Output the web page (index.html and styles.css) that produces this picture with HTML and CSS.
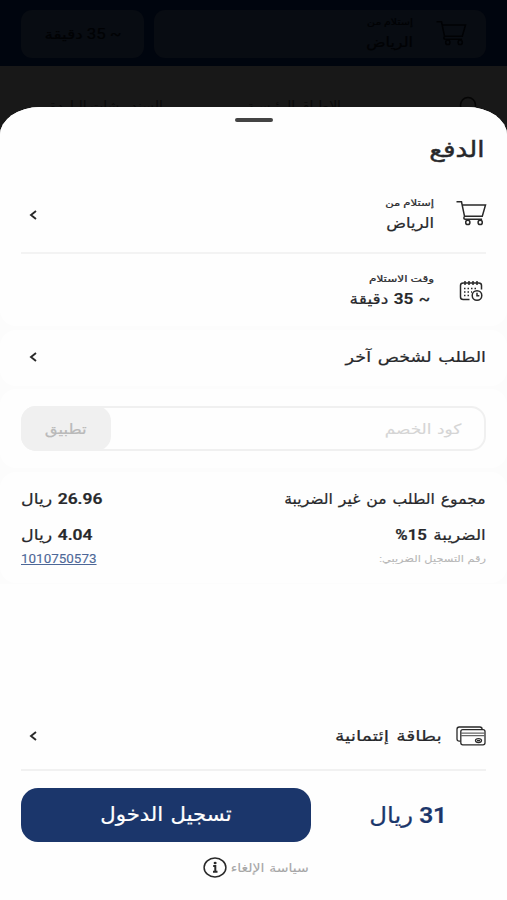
FILE: index.html
```html
<!DOCTYPE html>
<html lang="ar" dir="rtl">
<head>
<meta charset="utf-8">
<title>الدفع</title>
<link rel="stylesheet" href="styles.css">
</head>
<body>
<svg width="0" height="0" class="defs">
  <symbol id="cart" viewBox="0 0 32 26">
    <path d="M1.500 1.800h5l3.200 15.400M7.400 5h23.100l-3.200 11.200H9.600M9.700 16.800c-1.200.3-1.200 2.400.4 2.400h17"/>
    <circle cx="12.800" cy="22.400" r="2.100"/><circle cx="25.200" cy="22.400" r="2.100"/>
  </symbol>
  <symbol id="chevron" viewBox="0 0 8 10"><path d="M7 1L2 5l5 4"/></symbol>
</svg>
<header class="topbar">
  <div class="pill place">
    <svg class="cart dim"><use href="#cart"/></svg>
    <div><div class="t d-small">إستلام من</div><div class="t d-main">الرياض</div></div>
  </div>
  <div class="pill time"><span class="t d-time">~ 35 دقيقة</span></div>
</header>
<nav class="tabs">
  <svg class="search" viewBox="0 0 20 20"><circle cx="9" cy="9" r="7.500"/></svg>
  <span class="tab-a">الاطباق الرئيسية</span><span class="tab-b">السندويشات الباردة</span>
</nav>
<main class="sheet">
  <section class="card first">
    <div class="handle"></div>
    <h1><span class="t title">الدفع</span></h1>
    <div class="row pickup">
      <svg class="cart"><use href="#cart"/></svg>
      <div class="stack"><div class="t small s1">إستلام من</div><div class="t mid m1">الرياض</div></div>
      <svg class="chev"><use href="#chevron"/></svg>
    </div>
    <div class="row when">
      <svg class="cal" viewBox="0 0 24 22">
        <path d="M10.500 19.400H4.200c-1.800 0-2.700-.9-2.700-2.500V5.500c0-1.600.9-2.500 2.700-2.500h15.600c1.800 0 2.700.9 2.700 2.500v4M6 1v4M10 1v4M14 1v4M18 1v4"/>
        <path class="dots" d="M5 8.500h14M5 12h8M5 15.500h6"/>
        <circle cx="18" cy="15.500" r="4.800"/><path d="M18 12.800v2.900h2.300"/>
      </svg>
      <div class="stack"><div class="t small s2">وقت الاستلام</div><div class="t mid m2">~ <b>35</b> دقيقة</div></div>
    </div>
  </section>
  <section class="card other">
    <span class="t mid m3">الطلب لشخص آخر</span>
    <svg class="chev"><use href="#chevron"/></svg>
  </section>
  <section class="card coupon">
    <div class="field"><span class="t hint">كود الخصم</span><span class="apply"><span class="t apply-t">تطبيق</span></span></div>
  </section>
  <section class="card totals">
    <div class="line l1"><span class="t mid m4">مجموع الطلب من غير الضريبة</span><span class="t mid left v1"><b>26.96</b> ريال</span></div>
    <div class="line l2"><span class="t mid m5">الضريبة <b>15%</b></span><span class="t mid left v2"><b>4.04</b> ريال</span></div>
    <div class="line l3"><span class="t note">رقم التسجيل الضريبي:</span><a class="t left reg">1010750573</a></div>
  </section>
  <section class="method">
    <svg class="cards" viewBox="0 0 30 20">
      <path d="M4.500 15.200H3.300C1.800 15.200 1 14.400 1 13V3.200C1 1.800 1.800 1 3.300 1h20.500c1.500 0 2.300.8 2.300 2.200"/>
      <rect x="4.800" y="3.600" width="24.200" height="15.200" rx="2"/>
      <path class="stripe" d="M4.800 7.200h24.200M4.800 9.600h24.200"/>
      <ellipse cx="22.500" cy="14.600" rx="3" ry="1.900"/><path d="M21 14.600h3"/>
    </svg>
    <span class="t mid m6">بطاقة إئتمانية</span>
    <svg class="chev"><use href="#chevron"/></svg>
  </section>
  <footer>
    <div class="actions">
      <div class="price"><span class="t price-t"><b>31</b> ريال</span></div>
      <button><span class="t btn-t">تسجيل الدخول</span></button>
    </div>
    <div class="policy"><span class="t policy-t">سياسة الإلغاء</span>
      <svg class="info" viewBox="0 0 24 21"><ellipse cx="12" cy="10.500" rx="10.900" ry="9.400"/><path class="stem" d="M10.200 9h2.100v5.800M10 14.800h4.500"/><ellipse class="dot" cx="12.100" cy="6" rx="1.500" ry="1.200"/></svg>
    </div>
  </footer>
</main>
</body>
</html>
```
FILE: styles.css
```css
* { box-sizing: border-box; }
body { margin: 0; height: 900px; overflow: hidden; background: #181818; color: #27282b; font-family: Roboto, "DejaVu Sans", sans-serif; }
.defs { position: absolute; }
svg { display: block; fill: none; stroke: #292929; stroke-width: 1.5; flex: none; }
b { font-weight: 600; }
.t { display: inline-block; white-space: nowrap; transform-origin: right center; -webkit-text-stroke: .22px currentColor; }
.stack .t, .place .t { display: block; }
.t.left { transform-origin: left center; }

.topbar { height: 66px; background: #00050e; display: flex; gap: 10px; padding: 10px 21px 8px; }
.pill { background: #080c12; border-radius: 11px; display: flex; align-items: center; color: #010204; }
.place { flex: 1; padding: 0 19px 2px; gap: 22px; }
.time { width: 123px; justify-content: center; }
.d-small { font-size: 9px; line-height: 18px; transform: scaleX(1.22); }
.d-main { font-size: 14px; line-height: 22px; transform: scaleX(1.14); }
.t.d-time { font-size: 14px; transform-origin: center; transform: scaleX(1.2); }
.cart { width: 32px; height: 26px; }
.dim { stroke: #010204; }
.tabs { height: 41px; padding: 30px 28px 0; display: flex; overflow: hidden; color: #0a0a0a; font-size: 14px; line-height: 20px; white-space: nowrap; }
.search { width: 20px; height: 20px; stroke: #050505; }
.tab-a { margin-right: 118px; }
.tab-b { margin-right: 84px; }

.sheet { height: 793px; background: linear-gradient(#fcfcfc 0 477px, #fefefe 477px); border-radius: 40px 40px 0 0 / 28px 28px 0 0; overflow: hidden; display: flex; flex-direction: column; }
.card { background: #fefefe; border-radius: 16px; padding: 0 21px; }
.first { height: 219px; }
.handle { width: 38px; height: 4px; border-radius: 2px; background: #444; margin: 11px auto 0; }
h1 { margin: 8px 0 0; height: 40px; line-height: 40px; font-size: 22px; font-weight: 500; padding-right: 1px; }
.title { transform: scaleX(1.19); -webkit-text-stroke-width: .45px; }
.row { display: flex; }
.pickup { height: 84px; border-bottom: 2px solid #f3f3f3; padding-top: 25px; }
.pickup .cart { margin: 5px -1px 0 1px; }
.stack { margin-right: 20px; flex: 1; }
.small { font-size: 9.500px; line-height: 16px; }
.mid { font-size: 15px; line-height: 24px; font-weight: 500; }
.s1 { transform: scaleX(1.23); }
.s2 { transform: scaleX(1.27); }
.m1 { transform: scaleX(1.09); }
.m2 { transform: translateX(-4px) scaleX(1.14); word-spacing: 1px; }
.m3 { transform: scaleX(1.17); word-spacing: 2px; }
.m4 { transform: scaleX(1.04); word-spacing: 2px; }
.m5 { transform: scaleX(1.12); word-spacing: 2px; }
.v1, .v2 { transform: scaleX(1.16); word-spacing: 1px; }
.m6 { transform: scaleX(1.26); word-spacing: 2px; }
.chev { width: 8px; height: 10px; stroke-width: 1.900; margin-left: 8px; margin-right: auto; }
.pickup .chev { margin-top: 15px; }
.when { padding-top: 17px; }
.cal { width: 24px; height: 22px; margin: 9px 3px 0 5px; margin-left: 4px; }
.when .stack { margin-right: 21px; }
.dots { stroke-dasharray: 1.500 2; }
.other { margin-top: 4px; height: 56px; display: flex; align-items: center; padding-bottom: 2px; }
.coupon { margin-top: 3px; height: 79px; padding-top: 17px; }
.field { height: 45px; border: 2px solid #f0f0f0; border-radius: 15px; display: flex; justify-content: space-between; align-items: center; padding-right: 23px; }
.hint { color: #d5d5d5; font-size: 14px; transform: scaleX(1.21); word-spacing: 1px; -webkit-text-stroke-width: .1px; }
.apply { width: 90px; height: 45px; margin-left: -2px; background: #f0f0f0; border-radius: 15px; display: flex; align-items: center; justify-content: center; color: #b9b9b9; font-size: 14px; }
.t.apply-t { transform-origin: center; transform: scaleX(1.18); }
.totals { margin-top: 4px; height: 111px; padding-top: 15px; }
.line { display: flex; justify-content: space-between; }
.l1 { height: 36px; }
.l2 { height: 27px; }
.note { color: #b7b7b7; font-size: 9.500px; line-height: 18px; transform: scaleX(1.2); word-spacing: .5px; -webkit-text-stroke-width: .1px; }
.reg { color: #4d6797; font-size: 12px; line-height: 18px; text-decoration: underline; transform: scaleX(1.12); -webkit-text-stroke-width: .1px; }
.method { margin: 0 21px; padding: 124px 0 4px; height: 188px; border-bottom: 2px solid #f1f1f1; display: flex; align-items: center; }
.cards { width: 30px; height: 20px; stroke-width: 1.300; margin-left: 14px; }
.stripe { stroke: #666; }
footer { flex: 1; padding: 17px 21px 0; }
.actions { display: flex; height: 54px; }
.price { flex: 1; display: flex; align-items: center; padding: 0 39px 0 0; color: #1b366b; font-size: 22px; }
.price-t { transform: scaleX(1.11); }
button { width: 290px; border: 0; border-radius: 17px; background: #1b366b; color: #fff; font: 500 20px Roboto, "DejaVu Sans", sans-serif; padding: 0 0 3px; }
.t.btn-t { transform-origin: center; transform: scaleX(1.06); word-spacing: 2px; }
.policy { height: 51px; display: flex; align-items: center; padding-right: 177px; color: #a6a6a6; font-size: 12px; }
.policy-t { transform: scaleX(1.17); word-spacing: 1px; -webkit-text-stroke-width: .1px; }
.info { width: 24px; height: 21px; margin-right: 15px; }
.info .dot { fill: #292929; stroke: none; }
.info .stem { stroke-width: 2; }
```
